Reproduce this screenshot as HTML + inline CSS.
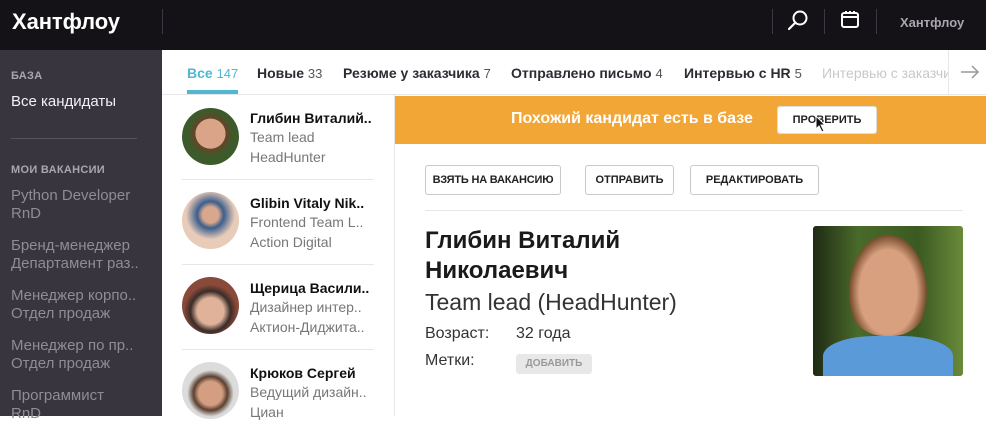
<!DOCTYPE html>
<html><head><meta charset="utf-8"><style>
*{margin:0;padding:0;box-sizing:border-box}
body{width:986px;height:416px;overflow:hidden;font-family:"Liberation Sans","DejaVu Sans",sans-serif;background:#fff;position:relative}
.a{position:absolute}
.hdr{left:0;top:0;width:986px;height:50px;background:#141217}
.logo{left:12px;top:9px;color:#fff;font-size:22px;font-weight:bold;letter-spacing:-0.1px}
.vs{width:1px;background:#3a3840}
.side{left:0;top:50px;width:162px;height:366px;background:#38353f}
.sh{font-size:11px;font-weight:bold;color:#a9a7ad;letter-spacing:.3px}
.si{font-size:15px;color:#8f8c95;line-height:18px;white-space:nowrap;overflow:hidden;width:140px}
.tab{top:65px;font-size:14px;font-weight:bold;color:#2d2b33;white-space:nowrap}
.tab span{font-weight:normal;color:#555;font-size:13px}
.av{width:57px;height:57px;border-radius:50%;left:182px}
.nm{left:250px;font-size:14px;font-weight:bold;color:#111;white-space:nowrap}
.sub{left:250px;font-size:14px;color:#777;white-space:nowrap;line-height:20px}
.sep{left:182px;width:192px;height:1px;background:#e6e6e6}
.btn{top:165px;height:30px;border:1px solid #c9c9c9;border-radius:3px;font-size:11px;font-weight:bold;color:#222;text-align:center;line-height:28px}
</style></head><body>
<div class="a hdr"></div>
<div class="a logo">Хантфлоу</div>
<div class="a vs" style="left:162px;top:9px;height:25px"></div>
<div class="a vs" style="left:772px;top:9px;height:25px"></div>
<div class="a vs" style="left:824px;top:9px;height:25px"></div>
<div class="a vs" style="left:876px;top:9px;height:25px"></div>
<svg class="a" style="left:786px;top:9px" width="24" height="24" viewBox="0 0 24 24"><circle cx="14" cy="9" r="6.5" fill="none" stroke="#fff" stroke-width="2"/><line x1="9.5" y1="13.5" x2="3" y2="20" stroke="#fff" stroke-width="2.2" stroke-linecap="round"/></svg>
<svg class="a" style="left:840px;top:10px" width="22" height="20" viewBox="0 0 22 20"><rect x="2" y="3" width="16" height="14" rx="2" fill="none" stroke="#fff" stroke-width="2"/><line x1="2" y1="7" x2="18" y2="7" stroke="#fff" stroke-width="2"/><line x1="6" y1="1" x2="6" y2="4" stroke="#fff" stroke-width="2"/><line x1="10" y1="1" x2="10" y2="4" stroke="#fff" stroke-width="2"/><line x1="14" y1="1" x2="14" y2="4" stroke="#fff" stroke-width="2"/></svg>
<div class="a" style="left:900px;top:15px;color:#a9a7ad;font-size:13px;font-weight:bold">Хантфлоу</div>

<div class="a side"></div>
<div class="a sh" style="left:11px;top:70px">БАЗА</div>
<div class="a si" style="left:11px;top:93px;color:#f2f2f2">Все кандидаты</div>
<div class="a" style="left:11px;top:138px;width:126px;height:1px;background:#55525b"></div>
<div class="a sh" style="left:11px;top:164px">МОИ ВАКАНСИИ</div>
<div class="a si" style="left:11px;top:187px">Python Developer<br>RnD</div>
<div class="a si" style="left:11px;top:237px">Бренд-менеджер<br>Департамент раз..</div>
<div class="a si" style="left:11px;top:287px">Менеджер корпо..<br>Отдел продаж</div>
<div class="a si" style="left:11px;top:337px">Менеджер по пр..<br>Отдел продаж</div>
<div class="a si" style="left:11px;top:387px">Программист<br>RnD</div>

<div class="a tab" style="left:187px;color:#4fb8d3">Все <span style="color:#4fb8d3">147</span></div>
<div class="a" style="left:187px;top:90px;width:51px;height:4px;background:#4fb8d3"></div>
<div class="a tab" style="left:257px">Новые <span>33</span></div>
<div class="a tab" style="left:343px">Резюме у заказчика <span>7</span></div>
<div class="a tab" style="left:511px">Отправлено письмо <span>4</span></div>
<div class="a tab" style="left:684px">Интервью с HR <span>5</span></div>
<div class="a tab" style="left:822px;width:126px;overflow:hidden;font-weight:normal;color:#c8c8c8">Интервью с заказчиком</div>
<div class="a" style="left:948px;top:50px;width:1px;height:44px;background:#e6e6e6"></div>
<svg class="a" style="left:959px;top:63px" width="22" height="18" viewBox="0 0 22 18"><path d="M2 9H19M13 3L19 9L13 15" fill="none" stroke="#999" stroke-width="1.5"/></svg>
<div class="a" style="left:162px;top:94px;width:824px;height:1px;background:#e6e6e6"></div>

<div class="a av" style="top:108px;background:radial-gradient(circle at 50% 45%,#d9a487 0 35%,#5a4a2a 36% 45%,#3d5a2a 50%);"></div>
<div class="a nm" style="top:110px">Глибин Виталий..</div>
<div class="a sub" style="top:127px">Team lead<br>HeadHunter</div>
<div class="a sep" style="top:179px"></div>
<div class="a av" style="top:192px;background:radial-gradient(circle at 50% 40%,#d8a78e 0 18%,#3c5e8c 30%,#e8cbb8 55%)"></div>
<div class="a nm" style="top:195px">Glibin Vitaly Nik..</div>
<div class="a sub" style="top:212px">Frontend Team L..<br>Action Digital</div>
<div class="a sep" style="top:264px"></div>
<div class="a av" style="top:277px;background:radial-gradient(circle at 50% 60%,#e0b29a 0 30%,#3a2c28 45%,#8a4a3a 60%)"></div>
<div class="a nm" style="top:280px">Щерица Васили..</div>
<div class="a sub" style="top:297px">Дизайнер интер..<br>Актион-Диджита..</div>
<div class="a sep" style="top:349px"></div>
<div class="a av" style="top:362px;background:radial-gradient(circle at 50% 55%,#d49e82 0 28%,#5a4030 40%,#dcdcdc 55%)"></div>
<div class="a nm" style="top:365px">Крюков Сергей</div>
<div class="a sub" style="top:382px">Ведущий дизайн..<br>Циан</div>
<div class="a" style="left:394px;top:95px;width:1px;height:321px;background:#e6e6e6"></div>

<div class="a" style="left:395px;top:96px;width:591px;height:48px;background:#f2a636"></div>
<div class="a" style="left:511px;top:110px;color:#fff;font-size:16px;font-weight:bold">Похожий кандидат есть в базе</div>
<div class="a" style="left:777px;top:106px;width:100px;height:28px;background:#fff;border:1px solid #ddd;border-radius:3px;font-size:11px;font-weight:bold;color:#222;text-align:center;line-height:27px">ПРОВЕРИТЬ</div>
<svg class="a" style="left:815px;top:115px" width="12" height="18" viewBox="0 0 12 18"><path d="M1 1V14L4 11L7 17L9 16L6 10H10Z" fill="#111" stroke="#fff" stroke-width="1"/></svg>

<div class="a btn" style="left:425px;width:136px;letter-spacing:-0.2px">ВЗЯТЬ НА ВАКАНСИЮ</div>
<div class="a btn" style="left:585px;width:89px">ОТПРАВИТЬ</div>
<div class="a btn" style="left:690px;width:129px">РЕДАКТИРОВАТЬ</div>
<div class="a" style="left:425px;top:210px;width:538px;height:1px;background:#e6e6e6"></div>
<div class="a" style="left:425px;top:226px;font-size:24px;font-weight:bold;color:#1a1a1a;line-height:30px">Глибин Виталий<br>Николаевич</div>
<div class="a" style="left:425px;top:289px;font-size:23px;color:#333">Team lead (HeadHunter)</div>
<div class="a" style="left:425px;top:325px;font-size:16px;color:#333">Возраст:</div>
<div class="a" style="left:516px;top:325px;font-size:16px;color:#333">32 года</div>
<div class="a" style="left:425px;top:352px;font-size:16px;color:#333">Метки:</div>
<div class="a" style="left:516px;top:354px;width:76px;height:20px;background:#e8e8e8;border-radius:3px;font-size:10px;font-weight:bold;color:#999;text-align:center;line-height:20px">ДОБАВИТЬ</div>
<div class="a" style="left:813px;top:226px;width:150px;height:150px;border-radius:3px;overflow:hidden;background:linear-gradient(90deg,#1e2a14,#4a6a2a 30%,#3a5a22 70%,#6a8a3a)">
<div class="a" style="left:30px;top:0;width:90px;height:110px;border-radius:45%;background:radial-gradient(ellipse at 50% 60%,#d9a080 0 45%,#7a5030 60%,transparent 62%)"></div>
<div class="a" style="left:10px;top:110px;width:130px;height:50px;border-radius:40% 40% 0 0;background:#5a9ad8"></div>
</div>
</body></html>
